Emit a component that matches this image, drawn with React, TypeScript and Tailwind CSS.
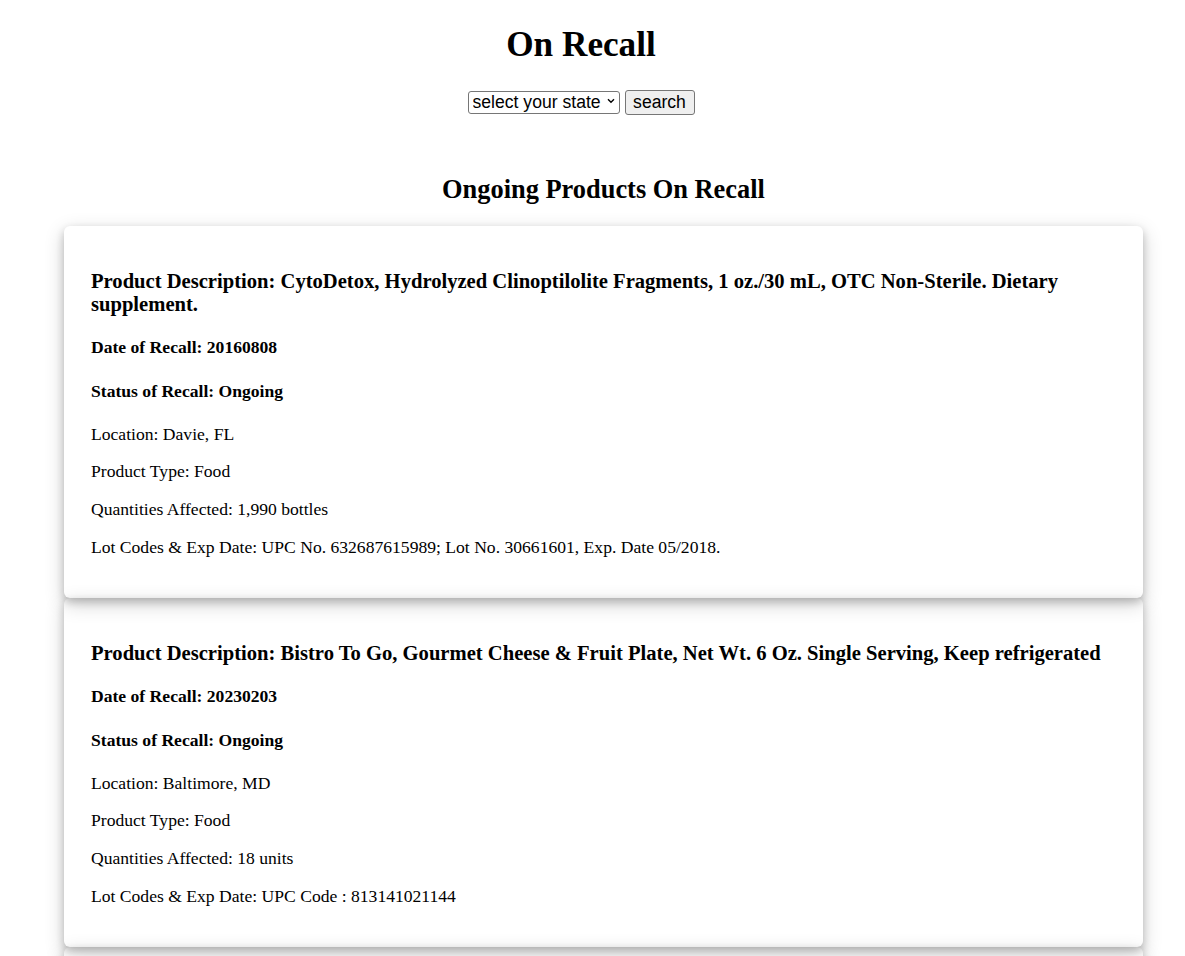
import React from 'react';

type Recall = {
  description: string;
  date: string;
  status: string;
  location: string;
  type: string;
  quantity: string;
  lot: string;
};

const recalls: Recall[] = [
  {
    description:
      'CytoDetox, Hydrolyzed Clinoptilolite Fragments, 1 oz./30 mL, OTC Non-Sterile. Dietary supplement.',
    date: '20160808',
    status: 'Ongoing',
    location: 'Davie, FL',
    type: 'Food',
    quantity: '1,990 bottles',
    lot: 'UPC No. 632687615989; Lot No. 30661601, Exp. Date 05/2018.',
  },
  {
    description:
      'Bistro To Go, Gourmet Cheese & Fruit Plate, Net Wt. 6 Oz. Single Serving, Keep refrigerated',
    date: '20230203',
    status: 'Ongoing',
    location: 'Baltimore, MD',
    type: 'Food',
    quantity: '18 units',
    lot: 'UPC Code : 813141021144',
  },
  {
    description: 'Fresh Cut Fruit Cup, Mixed Melon, Net Wt. 8 Oz.',
    date: '20230211',
    status: 'Ongoing',
    location: 'Baltimore, MD',
    type: 'Food',
    quantity: '42 units',
    lot: 'UPC Code : 813141021151',
  },
];

const RecallCard: React.FC<{ item: Recall }> = ({ item }) => (
  <li className="rounded-md px-[27px] pt-[44px] pb-[41px] shadow-[0_4px_8px_0_rgba(0,0,0,0.2),0_6px_20px_0_rgba(0,0,0,0.19)]">
    <h3 className="text-[20.6px] leading-[23px] font-bold">Product Description: {item.description}</h3>
    <h4 className="mt-[21px] text-[17.6px] leading-[20px] font-bold">Date of Recall: {item.date}</h4>
    <h4 className="mt-[24px] text-[17.6px] leading-[20px] font-bold">Status of Recall: {item.status}</h4>
    <p className="mt-[23px] text-[17.6px] leading-[20px]">Location: {item.location}</p>
    <p className="mt-[17px] text-[17.6px] leading-[20px]">Product Type: {item.type}</p>
    <p className="mt-[18px] text-[17.6px] leading-[20px]">Quantities Affected: {item.quantity}</p>
    <p className="mt-[18px] text-[17.6px] leading-[20px]">Lot Codes &amp; Exp Date: {item.lot}</p>
  </li>
);

const App: React.FC = () => {
  return (
    <div className="min-h-screen bg-white text-black font-['Liberation_Serif','Times_New_Roman',serif]">
      <header className="w-[1162px] text-center">
        <h1 className="pt-[25px] text-[35.2px] leading-[40px] font-bold">On Recall</h1>
        <form className="mt-[24px] flex items-center justify-center gap-[5px] font-['Liberation_Sans',Arial,sans-serif] text-[17.6px]">
          <div className="relative">
            <select className="h-[23px] w-[152px] appearance-none rounded-[3px] border border-[#767676] bg-white pl-[4px] pr-[16px] text-[17.6px] leading-[20px] text-black">
              <option>select your state</option>
              <option>FL</option>
              <option>MD</option>
            </select>
            <svg
              className="pointer-events-none absolute right-[5px] top-[9px]"
              width="8"
              height="6"
              viewBox="0 0 8 6"
              fill="none"
              stroke="#000"
              strokeWidth="1.4"
            >
              <path d="M1 1.2l3 3 3-3" />
            </svg>
          </div>
          <button
            type="button"
            className="h-[25px] w-[70px] rounded-[3px] border border-[#767676] bg-[#efefef] text-[17.6px] leading-[20px] text-black"
          >
            search
          </button>
        </form>
      </header>

      <main className="ml-[64px] w-[1079px]">
        <h2 className="mt-[59px] text-center text-[26.4px] leading-[30px] font-bold">Ongoing Products On Recall</h2>
        <ul className="mt-[22px] flex flex-col">
          {recalls.map((r, i) => (
            <RecallCard key={i} item={r} />
          ))}
        </ul>
      </main>
    </div>
  );
};

export default App;
